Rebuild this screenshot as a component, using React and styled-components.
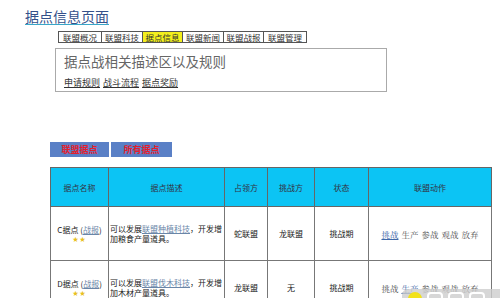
import React from "react";
import styled, { createGlobalStyle } from "styled-components";

const GlobalStyle = createGlobalStyle`
  body {
    margin: 0;
    background: #fff;
    font-family: "Noto Sans CJK SC", "DejaVu Sans", sans-serif;
    overflow: hidden;
  }
`;

const Page = styled.div`
  position: relative;
  width: 500px;
  height: 298px;
  overflow: hidden;
  padding-top: 7px;
  box-sizing: border-box;
`;

const Title = styled.h1`
  margin: 0 0 0 25px;
  font-size: 14px;
  line-height: 18px;
  font-weight: normal;
  color: #34508a;
  text-decoration: underline;
  text-decoration-color: #3aa6c8;
  text-underline-offset: 2px;
`;

const TabBar = styled.div`
  display: flex;
  width: max-content;
  margin: 6px 0 0 58px;
  border: 1px solid #555;
  height: 10px;
  background: #fff;
`;

const Tab = styled.span`
  display: flex;
  align-items: center;
  justify-content: center;
  width: ${p => p.w}px;
  font-size: 8.5px;
  line-height: 10px;
  color: #333;
  background: ${p => (p.active ? "#f4f01c" : "#fff")};
  border-left: ${p => (p.first ? "none" : "1px solid #555")};
  box-sizing: border-box;
`;

const InfoBox = styled.div`
  width: 332px;
  height: 44px;
  margin: 5px 0 0 55px;
  border: 1px solid #aaa;
  box-sizing: border-box;
  padding: 2px 8px 0;
`;

const InfoTitle = styled.div`
  font-size: 13.5px;
  line-height: 20px;
  color: #666;
`;

const LinkRow = styled.div`
  display: flex;
  gap: 3px;
  margin-top: 6px;
  font-size: 9px;
  line-height: 11px;
`;

const RuleLink = styled.a`
  color: #333;
  text-decoration: underline;
`;

const ButtonRow = styled.div`
  display: flex;
  gap: 2px;
  margin: 50px 0 0 50px;
`;

const TabButton = styled.button`
  width: ${p => p.w}px;
  height: 15px;
  padding: 0;
  border: none;
  background: #5a80c6;
  color: #e4202c;
  font-family: "Noto Sans CJK SC", sans-serif;
  font-weight: bold;
  font-size: 9px;
  line-height: 15px;
`;

const Table = styled.table`
  margin: 10px 0 0 50px;
  width: 441px;
  border-collapse: collapse;
  table-layout: fixed;
  border: 1px solid #555;
`;

const Th = styled.th`
  height: 38px;
  background: #0cc4f4;
  border: 1px solid #666;
  font-size: 8px;
  font-weight: normal;
  color: #334;
  padding: 0;
`;

const Td = styled.td`
  height: 53px;
  border: 1px solid #777;
  font-size: 8px;
  line-height: 10px;
  color: #222;
  text-align: ${p => (p.left ? "left" : "center")};
  padding: ${p => (p.left ? "0 1px" : "0")};
`;

const SoftLink = styled.a`
  color: #6a86a8;
  text-decoration: underline;
`;

const Stars = styled.div`
  color: #e8c020;
  font-size: 6px;
  line-height: 8px;
  letter-spacing: 1px;
`;

const Actions = styled.div`
  display: flex;
  justify-content: center;
  gap: 3px;
  font-family: "Noto Serif CJK SC", "Noto Sans CJK SC", serif;
  font-size: 8.5px;
  color: #555;
`;

const Action = styled.span`
  color: ${p => (p.link ? "#3f68a8" : "#555")};
  text-decoration: ${p => (p.link ? "underline" : "none")};
`;

const Watermark = styled.div`
  position: absolute;
  left: 402px;
  top: 289px;
  width: 110px;
  height: 20px;
  border-radius: 6px;
  background: rgba(205, 205, 205, 0.8);
  display: flex;
  gap: 5px;
  padding: 3px 6px;
  box-sizing: border-box;
`;

const Dot = styled.div`
  width: 14px;
  height: 14px;
  border-radius: 50%;
  background: #f2e21a;
`;

const Frame = styled.div`
  width: 16px;
  height: 14px;
  border-radius: 4px;
  border: 2px solid #fff;
  box-sizing: border-box;
`;

const tabs = [
  ["联盟概况", 42],
  ["联盟科技", 41],
  ["据点信息", 40],
  ["联盟新闻", 41],
  ["联盟战报", 40],
  ["联盟管理", 43]
];

const cols = [58, 116, 43, 47, 54, 123];
const heads = ["据点名称", "据点描述", "占领方", "挑战方", "状态", "联盟动作"];
const actionNames = ["挑战", "生产", "参战", "观战", "放弃"];

const rows = [
  {
    name: "C据点",
    tech: "联盟种植科技",
    tail: "加粮食产量道具。",
    owner: "蛇联盟",
    rival: "龙联盟",
    linked: "挑战"
  },
  {
    name: "D据点",
    tech: "联盟伐木科技",
    tail: "加木材产量道具。",
    owner: "龙联盟",
    rival: "无",
    linked: "生产"
  }
];

const App = () => (
  <Page>
    <GlobalStyle />
    <Title>据点信息页面</Title>
    <TabBar>
      {tabs.map(([label, w], i) => (
        <Tab key={label} w={w} first={i === 0} active={i === 2}>
          {label}
        </Tab>
      ))}
    </TabBar>
    <InfoBox>
      <InfoTitle>据点战相关描述区以及规则</InfoTitle>
      <LinkRow>
        <RuleLink>申请规则</RuleLink>
        <RuleLink>战斗流程</RuleLink>
        <RuleLink>据点奖励</RuleLink>
      </LinkRow>
    </InfoBox>
    <ButtonRow>
      <TabButton w={59}>联盟据点</TabButton>
      <TabButton w={61}>所有据点</TabButton>
    </ButtonRow>
    <Table>
      <colgroup>
        {cols.map((w, i) => (
          <col key={i} style={{ width: w }} />
        ))}
      </colgroup>
      <thead>
        <tr>
          {heads.map(h => (
            <Th key={h}>{h}</Th>
          ))}
        </tr>
      </thead>
      <tbody>
        {rows.map(r => (
          <tr key={r.name}>
            <Td>
              {r.name} (<SoftLink>战报</SoftLink>)
              <Stars>★★</Stars>
            </Td>
            <Td left>
              可以发展<SoftLink>{r.tech}</SoftLink>，开发增{r.tail}
            </Td>
            <Td>{r.owner}</Td>
            <Td>{r.rival}</Td>
            <Td>挑战期</Td>
            <Td>
              <Actions>
                {actionNames.map(a => (
                  <Action key={a} link={a === r.linked}>
                    {a}
                  </Action>
                ))}
              </Actions>
            </Td>
          </tr>
        ))}
      </tbody>
    </Table>
    <Watermark>
      <Dot />
      <Frame />
      <Frame />
      <Frame />
    </Watermark>
  </Page>
);

export default App;
